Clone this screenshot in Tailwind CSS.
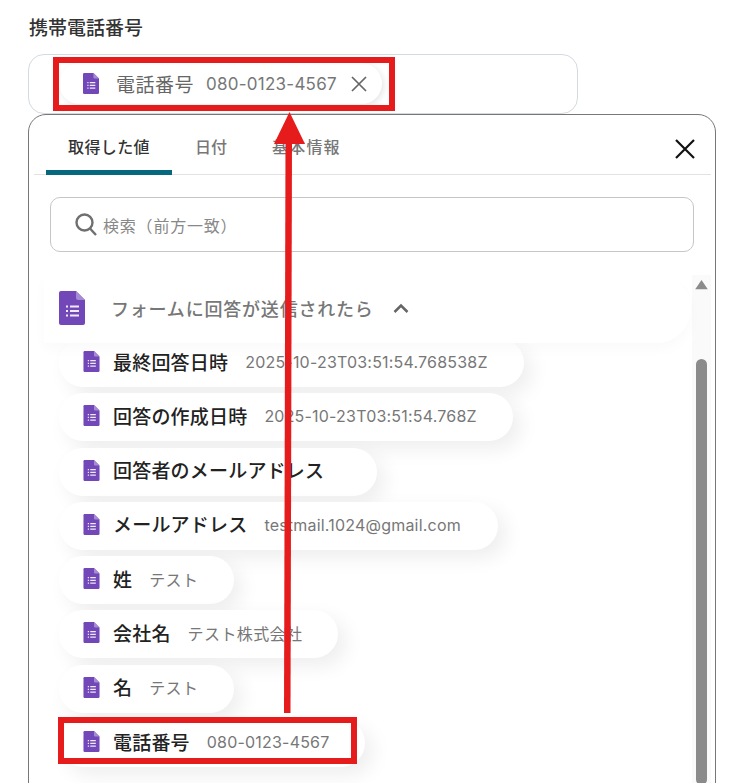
<!DOCTYPE html>
<html lang="ja">
<head>
<meta charset="utf-8">
<script src="https://cdn.jsdelivr.net/npm/@tailwindcss/browser@4"></script>
</head>
<body class="bg-white">
<svg width="0" height="0" class="absolute">
  <defs>
    <symbol id="forms" viewBox="0 0 26 34">
      <path d="M2 0H17L26 9V32a2 2 0 0 1-2 2H2a2 2 0 0 1-2-2V2a2 2 0 0 1 2-2Z" fill="#7248b9"/>
      <path d="M17 0L26 9H19a2 2 0 0 1-2-2Z" fill="#a58bd6"/>
      <path d="M7 14.5h2v2H7zM11 14.5h9v2h-9zM7 19h2v2H7zM11 19h9v2h-9zM7 23.500h2v2H7zM11 23.500h9v2h-9z" fill="#efe9f9"/>
    </symbol>
  </defs>
</svg>
<div class="relative w-[742px] h-[783px] overflow-hidden font-['Noto_Sans_CJK_JP','Noto_Sans',sans-serif]">
  <div class="pl-[29px] pt-[15px] h-[54px] text-[19px] leading-[24px] font-medium text-[#333]">携帯電話番号</div>

  <div class="ml-[28px] w-[550px] h-[60px] border border-[#d5dae0] rounded-[16px] pl-[30px] pt-[8px]">
    <div class="w-[323px] h-[41px] rounded-full bg-white shadow-[2px_2px_6px_rgba(0,0,0,0.10)] flex items-center pl-[24px]">
      <svg class="w-[16px] h-[21px] shrink-0"><use href="#forms"/></svg>
      <span class="ml-[17px] text-[19px] leading-[24px] text-[#666] tracking-[0.5px]">電話番号</span>
      <span class="ml-[12px] text-[17px] leading-[24px] text-[#777] tracking-[0.25px] font-['Inter',sans-serif]">080-0123-4567</span>
      <svg class="ml-[13px] w-[18px] h-[18px]" viewBox="0 0 18 18" fill="none" stroke="#666" stroke-width="1.700"><path d="M2 2L16 16M16 2L2 16"/></svg>
    </div>
  </div>

  <div class="ml-[28px] w-[688px] h-[700px] border border-[#777] rounded-[18px] bg-white flex flex-col">
    <div class="ml-[5px] mr-[4px] h-[60px] border-b border-[#e2e2e2] flex relative shrink-0">
      <div class="ml-[12px] w-[126px] h-[60px] flex justify-center pt-[19px] border-b-[5px] border-[#06687f] rounded-t-[4px] text-[16px] leading-[24px] font-medium text-[#333] tracking-[0.4px]">取得した値</div>
      <div class="ml-[23px] pt-[19px] text-[16px] leading-[24px] font-medium text-[#777]">日付</div>
      <div class="ml-[45px] pt-[19px] text-[16px] leading-[24px] font-medium text-[#777] tracking-[1.200px]">基本情報</div>
      <svg class="ml-[333px] mt-[23px] w-[22px] h-[22px]" viewBox="0 0 22 22" fill="none" stroke="#111" stroke-width="2.200"><path d="M2 2L20 20M20 2L2 20"/></svg>
    </div>

    <div class="ml-[21px] mt-[22px] w-[644px] h-[55px] border border-[#c6c6c6] rounded-[10px] flex items-center pl-[24px] shrink-0">
      <svg class="w-[22px] h-[23px]" viewBox="0 0 22 23" fill="none" stroke="#6f6f6f" stroke-width="2.400"><circle cx="9.500" cy="9.500" r="8"/><path d="M15 15.500L21 22"/></svg>
      <span class="ml-[6px] text-[16px] leading-[22px] text-[#888] tracking-[0.8px]">検索（前方一致）</span>
    </div>

    <div class="relative flex-1 mt-[23px]">
      <div class="absolute left-[663px] top-0 w-[19px] h-[510px] bg-[#fafafa] flex flex-col items-center">
        <svg class="mt-[5px] w-[13px] h-[10px]" viewBox="0 0 13 10"><path d="M6.500 0L13 9.500H0Z" fill="#8b8b8b"/></svg>
        <div class="mt-[69px] w-[11px] h-[440px] rounded-full bg-[#8b8b8b]"></div>
      </div>

      <div class="relative z-10 ml-[15px] w-[647px] h-[68px] bg-white rounded-r-[34px] shadow-[0_6px_14px_rgba(0,0,0,0.025)] flex items-center pl-[15px] pb-[2px]">
        <svg class="w-[26px] h-[34px]"><use href="#forms"/></svg>
        <span class="ml-[26px] text-[18px] leading-[24px] font-medium text-[#777] tracking-[0.8px]">フォームに回答が送信されたら</span>
        <svg class="ml-[19px] w-[16px] h-[10px]" viewBox="0 0 16 10" fill="none" stroke="#666" stroke-width="2.500"><path d="M1.500 9L8 2.500L14.500 9"/></svg>
      </div>

      <div class="ml-[30px] -mt-[4px] flex flex-col gap-[6.300px] items-start">
        <div class="w-[465px] h-[48px] pb-[3px] rounded-full bg-white shadow-[8px_8px_20px_rgba(0,0,0,0.07)] flex items-center pl-[24px]">
          <svg class="w-[17px] h-[21px]"><use href="#forms"/></svg>
          <span class="ml-[13px] text-[19px] leading-[24px] font-medium text-[#222] tracking-[0.2px]">最終回答日時</span>
          <span class="ml-[17px] mt-[1px] text-[16px] leading-[22px] text-[#777] tracking-[0.2px] font-['Inter','Noto_Sans_CJK_JP',sans-serif]">2025-10-23T03:51:54.768538Z</span>
        </div>
        <div class="w-[454px] h-[48px] pb-[3px] rounded-full bg-white shadow-[8px_8px_20px_rgba(0,0,0,0.07)] flex items-center pl-[24px]">
          <svg class="w-[17px] h-[21px]"><use href="#forms"/></svg>
          <span class="ml-[13px] text-[19px] leading-[24px] font-medium text-[#222] tracking-[0.2px]">回答の作成日時</span>
          <span class="ml-[17px] mt-[1px] text-[16px] leading-[22px] text-[#777] tracking-[0.2px] font-['Inter','Noto_Sans_CJK_JP',sans-serif]">2025-10-23T03:51:54.768Z</span>
        </div>
        <div class="w-[318px] h-[48px] pb-[3px] rounded-full bg-white shadow-[8px_8px_20px_rgba(0,0,0,0.07)] flex items-center pl-[24px]">
          <svg class="w-[17px] h-[21px]"><use href="#forms"/></svg>
          <span class="ml-[13px] text-[19px] leading-[24px] font-medium text-[#222] tracking-[0.2px]">回答者のメールアドレス</span>
        </div>
        <div class="w-[439px] h-[48px] pb-[3px] rounded-full bg-white shadow-[8px_8px_20px_rgba(0,0,0,0.07)] flex items-center pl-[24px]">
          <svg class="w-[17px] h-[21px]"><use href="#forms"/></svg>
          <span class="ml-[13px] text-[19px] leading-[24px] font-medium text-[#222] tracking-[0.2px]">メールアドレス</span>
          <span class="ml-[17px] mt-[1px] text-[16px] leading-[22px] text-[#777] tracking-[0.2px] font-['Inter','Noto_Sans_CJK_JP',sans-serif]">testmail.1024@gmail.com</span>
        </div>
        <div class="w-[175px] h-[48px] pb-[3px] rounded-full bg-white shadow-[8px_8px_20px_rgba(0,0,0,0.07)] flex items-center pl-[24px]">
          <svg class="w-[17px] h-[21px]"><use href="#forms"/></svg>
          <span class="ml-[13px] text-[19px] leading-[24px] font-medium text-[#222] tracking-[0.2px]">姓</span>
          <span class="ml-[17px] text-[16px] leading-[22px] text-[#777] tracking-[0.4px]">テスト</span>
        </div>
        <div class="w-[279px] h-[48px] pb-[3px] rounded-full bg-white shadow-[8px_8px_20px_rgba(0,0,0,0.07)] flex items-center pl-[24px]">
          <svg class="w-[17px] h-[21px]"><use href="#forms"/></svg>
          <span class="ml-[13px] text-[19px] leading-[24px] font-medium text-[#222] tracking-[0.2px]">会社名</span>
          <span class="ml-[17px] text-[16px] leading-[22px] text-[#777] tracking-[0.4px]">テスト株式会社</span>
        </div>
        <div class="w-[175px] h-[48px] pb-[3px] rounded-full bg-white shadow-[8px_8px_20px_rgba(0,0,0,0.07)] flex items-center pl-[24px]">
          <svg class="w-[17px] h-[21px]"><use href="#forms"/></svg>
          <span class="ml-[13px] text-[19px] leading-[24px] font-medium text-[#222] tracking-[0.2px]">名</span>
          <span class="ml-[17px] text-[16px] leading-[22px] text-[#777] tracking-[0.4px]">テスト</span>
        </div>
        <div class="w-[306px] h-[48px] pb-[3px] rounded-full bg-white shadow-[8px_8px_20px_rgba(0,0,0,0.07)] flex items-center pl-[24px]">
          <svg class="w-[17px] h-[21px]"><use href="#forms"/></svg>
          <span class="ml-[13px] text-[19px] leading-[24px] font-medium text-[#222] tracking-[0.2px]">電話番号</span>
          <span class="ml-[17px] mt-[1px] text-[16px] leading-[22px] text-[#777] tracking-[0.2px] font-['Inter','Noto_Sans_CJK_JP',sans-serif]">080-0123-4567</span>
        </div>
      </div>
    </div>
  </div>

  <!-- annotation overlay -->
  <div class="absolute z-20 left-[53px] top-[57px] w-[342px] h-[54px] border-[6px] border-[#e61c1c]"></div>
  <div class="absolute z-20 left-[58px] top-[717px] w-[299px] h-[47px] border-[6px] border-[#e61c1c]"></div>
  <svg class="absolute z-20 left-0 top-0 w-[742px] h-[783px] pointer-events-none" viewBox="0 0 742 783">
    <path d="M285.500 142H292L290.500 713H284Z" fill="#e61c1c"/>
    <path d="M289.500 112L305 144H274Z" fill="#e61c1c"/>
  </svg>
</div>
</body>
</html>
